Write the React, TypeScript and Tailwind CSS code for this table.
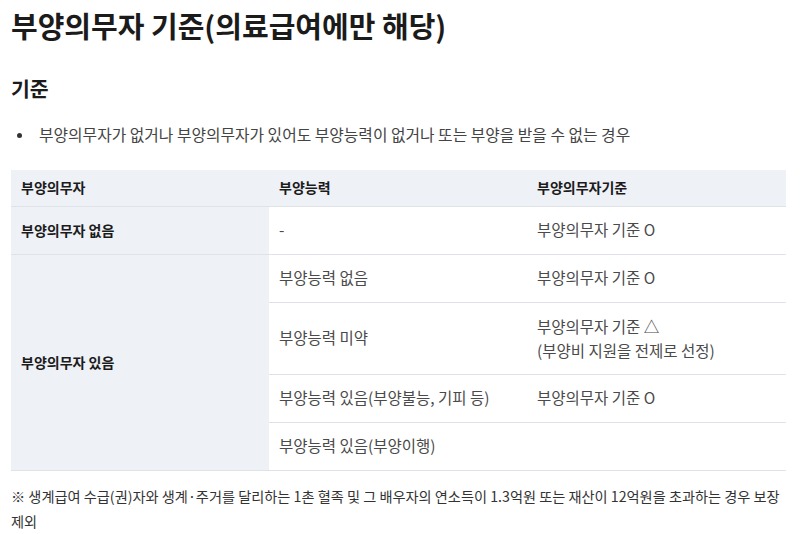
export default function App() {
  const cell = "border-b border-[#dfe3e8] px-[10px] align-middle";
  return (
    <div
      className="w-[800px] h-[534px] bg-white px-[11px] text-[#222]"
      style={{ fontFamily: '"Noto Sans CJK KR", "Noto Sans", sans-serif' }}
    >
      <h1 className="pt-[5px] text-[29px] font-bold leading-[40px] text-[#1b1b1b]">
        부양의무자 기준(의료급여에만 해당)
      </h1>
      <h2 className="mt-[28px] text-[20.5px] font-bold leading-[30px] text-[#1b1b1b]">기준</h2>
      <ul className="mt-[19px]">
        <li className="flex items-center text-[15.8px] leading-[26px] text-[#444]">
          <span className="ml-[6px] mr-[17px] h-[5px] w-[5px] rounded-full bg-[#333]" />
          부양의무자가 없거나 부양의무자가 있어도 부양능력이 없거나 또는 부양을 받을 수 없는 경우
        </li>
      </ul>
      <table className="mt-[22px] w-[775px] table-fixed border-collapse">
        <thead>
          <tr className="h-[36px] bg-[#eef1f6] text-left text-[14px] font-bold text-[#1b1b1b]">
            <th className={cell + " w-[258px]"}>부양의무자</th>
            <th className={cell + " w-[258px]"}>부양능력</th>
            <th className={cell}>부양의무자기준</th>
          </tr>
        </thead>
        <tbody className="text-[15.5px] text-[#4a4a4a]">
          <tr className="h-[48px]">
            <td className={cell + " bg-[#eef1f6] text-[14px] font-bold text-[#1b1b1b]"}>부양의무자 없음</td>
            <td className={cell}>-</td>
            <td className={cell}>부양의무자 기준 O</td>
          </tr>
          <tr className="h-[48px]">
            <td rowSpan={4} className={cell + " bg-[#eef1f6] text-[14px] font-bold text-[#1b1b1b]"}>
              부양의무자 있음
            </td>
            <td className={cell}>부양능력 없음</td>
            <td className={cell}>부양의무자 기준 O</td>
          </tr>
          <tr className="h-[72px]">
            <td className={cell}>부양능력 미약</td>
            <td className={cell + " leading-[24px]"}>
              부양의무자 기준 △
              <br />
              (부양비 지원을 전제로 선정)
            </td>
          </tr>
          <tr className="h-[48px]">
            <td className={cell}>부양능력 있음(부양불능, 기피 등)</td>
            <td className={cell}>부양의무자 기준 O</td>
          </tr>
          <tr className="h-[48px]">
            <td className={cell}>부양능력 있음(부양이행)</td>
            <td className={cell}></td>
          </tr>
        </tbody>
      </table>
      <p className="mt-[13px] w-[775px] text-[14.2px] leading-[25px] text-[#333]">
        ※ 생계급여 수급(권)자와 생계·주거를 달리하는 1촌 혈족 및 그 배우자의 연소득이 1.3억원 또는 재산이 12억원을 초과하는 경우 보장 제외
      </p>
    </div>
  );
}
